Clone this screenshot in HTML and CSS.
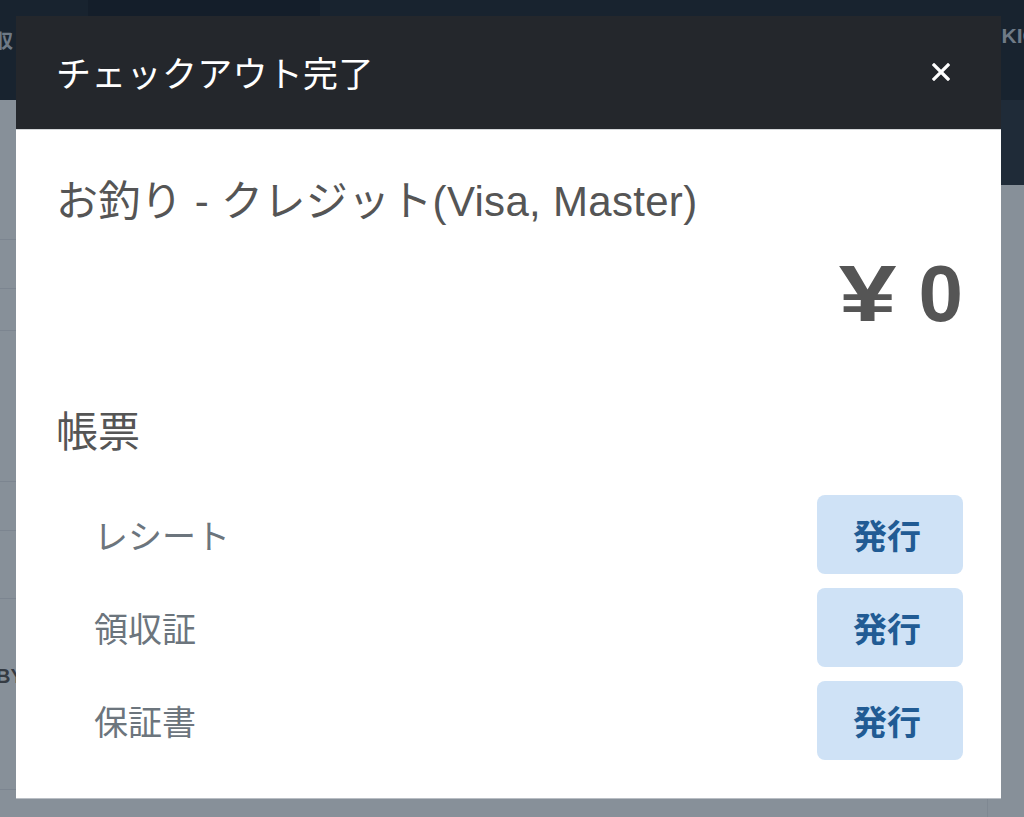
FILE: index.html
```html
<!DOCTYPE html>
<html lang="ja">

<head>
    <meta charset="UTF-8">
    <meta name="viewport" content="width=device-width, initial-scale=1.0">
    <title>チェックアウト完了</title>
    <link rel="stylesheet" href="styles.css">
</head>

<body>
    <div class="page">
        <div class="nav">
            <span class="nav-left">領収</span>
            <div class="nav-tab"></div>
            <span class="nav-right">KIOSK</span>
        </div>
        <div class="workspace">
            <div class="list">
                <div class="list-row row-a"></div>
                <div class="list-row row-b"></div>
                <div class="list-row row-c"></div>
                <div class="list-row row-d"></div>
                <div class="list-row row-e"></div>
                <div class="list-row row-f"></div>
                <div class="list-row row-g"><span class="row-text">BY</span></div>
            </div>
            <div class="side">
                <div class="side-head"></div>
                <div class="side-card"></div>
            </div>
        </div>
    </div>

    <div class="backdrop">
        <div class="modal">
            <div class="modal-header">
                <h5 class="modal-title">チェックアウト完了</h5>
                <button class="close" type="button">
                    <svg width="18" height="18" viewBox="0 0 18 18">
                        <path d="M2 2 L16 16 M16 2 L2 16" stroke="#fff" stroke-width="3.2" stroke-linecap="square" />
                    </svg>
                </button>
            </div>
            <div class="modal-body">
                <div class="change-label">お釣り - クレジット(Visa, Master)</div>
                <div class="change-amount"><span class="yen">¥</span> 0</div>
                <div class="docs-title">帳票</div>
                <div class="docs">
                    <div class="doc-row">
                        <span class="doc-name">レシート</span>
                        <button class="btn-issue" type="button">発行</button>
                    </div>
                    <div class="doc-row">
                        <span class="doc-name">領収証</span>
                        <button class="btn-issue" type="button">発行</button>
                    </div>
                    <div class="doc-row">
                        <span class="doc-name">保証書</span>
                        <button class="btn-issue" type="button">発行</button>
                    </div>
                </div>
            </div>
        </div>
    </div>
</body>

</html>
```

FILE: styles.css
```css
* {
    box-sizing: border-box;
}

body {
    margin: 0;
    width: 1024px;
    height: 817px;
    overflow: hidden;
    background-color: #879099;
    font-family: "Liberation Sans", "Noto Sans CJK JP", sans-serif;
}

/* 背景の画面（暗くなった状態） */
.page {
    width: 1024px;
    height: 817px;
}

.page>.nav {
    height: 100px;
    background-color: #18232f;
    display: flex;
    align-items: flex-start;
}

.page>.nav>.nav-left {
    margin-left: -25px;
    margin-top: 26px;
    font-size: 19px;
    font-weight: bold;
    color: #6f7a86;
}

.page>.nav>.nav-tab {
    width: 232px;
    height: 60px;
    margin-left: 75px;
    background-color: #141e2a;
    border-radius: 0 0 10px 10px;
}

.page>.nav>.nav-right {
    margin-left: auto;
    margin-right: -44px;
    margin-top: 24px;
    font-size: 21px;
    font-weight: bold;
    color: #6f7a86;
}

.page>.workspace {
    display: flex;
    height: 717px;
}

.workspace>.list {
    flex: 1;
}

.workspace>.list>.list-row {
    border-bottom: 1px solid #7c8590;
}

.list-row.row-a { height: 140px; }
.list-row.row-b { height: 49px; }
.list-row.row-c { height: 42px; }
.list-row.row-d { height: 151px; }
.list-row.row-e { height: 49px; }
.list-row.row-f { height: 68px; }
.list-row.row-g { height: 191px; padding-top: 66px; }

.list-row>.row-text {
    margin-left: -4px;
    font-size: 20px;
    font-weight: bold;
    color: #353b43;
}

.workspace>.side {
    width: 400px;
}

.workspace>.side>.side-head {
    height: 85px;
    background-color: #1f2b38;
}

.workspace>.side>.side-card {
    height: 632px;
    margin-right: 36px;
    border-right: 1px solid #7f8892;
}

/* モーダル */
.backdrop {
    position: fixed;
    top: 0;
    left: 0;
    right: 0;
    bottom: 0;
    padding: 16px 23px 0 16px;
}

.modal {
    width: 985px;
    background-color: #fff;
    border-bottom: 1px solid #b9bec4;
}

.modal-header {
    height: 114px;
    padding: 0 51px 0 40px;
    background-color: #24272c;
    border-bottom: 1px solid #d4d7da;
    display: flex;
    align-items: center;
    justify-content: space-between;
}

.modal-title {
    margin: 0;
    margin-top: -2px;
    font-size: 35px;
    font-weight: normal;
    color: #fff;
    letter-spacing: 0.3px;
}

.close {
    padding: 0;
    border: none;
    background: none;
    width: 18px;
    height: 18px;
    margin-top: -2px;
}

.close svg {
    display: block;
}

.modal-body {
    padding: 48px 38px 38px 40px;
    color: #555;
}

.change-label {
    font-size: 42px;
    line-height: 48px;
    letter-spacing: 0.3px;
}

.change-amount {
    margin-top: 20px;
    font-size: 80px;
    line-height: 96px;
    font-weight: bold;
    text-align: right;
}

.change-amount>.yen {
    display: inline-block;
    transform: scaleX(1.3);
    transform-origin: right center;
}

.docs-title {
    margin-top: 66px;
    font-size: 42px;
    line-height: 50px;
}

.docs {
    margin-top: 37px;
    display: flex;
    flex-direction: column;
    gap: 14px;
}

.doc-row {
    display: flex;
    align-items: center;
    justify-content: space-between;
    padding-left: 38px;
}

.doc-name {
    font-size: 34px;
    color: #6c757d;
}

.btn-issue {
    width: 146px;
    height: 79px;
    border: none;
    border-radius: 8px;
    background-color: #cfe2f6;
    color: #215b94;
    font-family: "Liberation Sans", "Noto Sans CJK JP", sans-serif;
    font-size: 34px;
    font-weight: bold;
    padding: 0 0 0 0;
    text-indent: -6px;
}
```
